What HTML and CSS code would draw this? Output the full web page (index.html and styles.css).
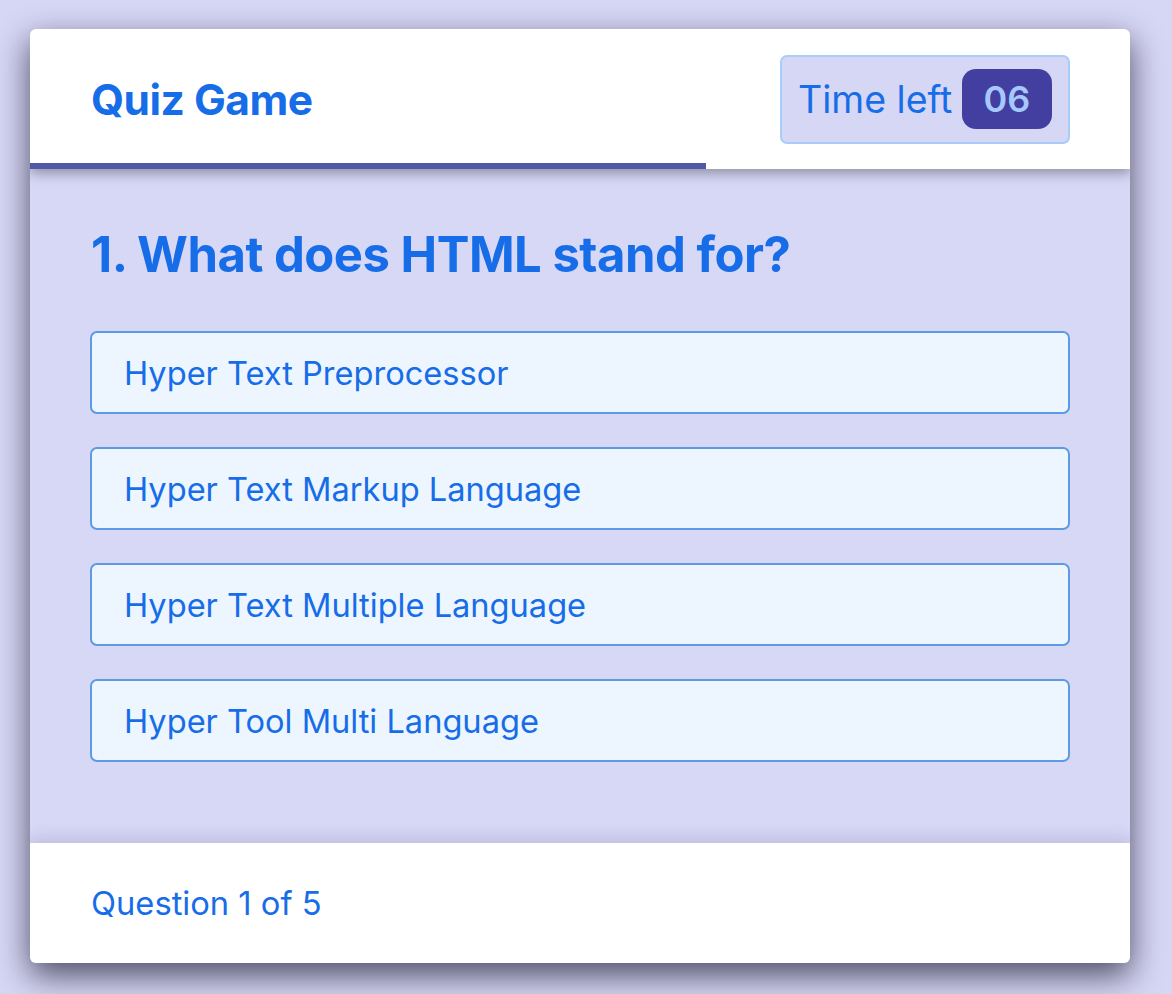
FILE: index.html
```html
<!DOCTYPE html>
<html lang="en">
<head>
<meta charset="utf-8">
<title>Quiz Game</title>
<link rel="stylesheet" href="styles.css">
</head>
<body>
<div class="quiz">
  <header class="quiz-header">
    <h1 class="title">Quiz Game</h1>
    <div class="timer">
      <span class="timer-label">Time left</span>
      <span class="timer-sec">06</span>
    </div>
    <div class="time-line" style="width: 676px;"></div>
  </header>
  <section class="quiz-body">
    <h2 class="question">1. What does HTML stand for?</h2>
    <ul class="options">
      <li class="option">Hyper Text Preprocessor</li>
      <li class="option">Hyper Text Markup Language</li>
      <li class="option">Hyper Text Multiple Language</li>
      <li class="option">Hyper Tool Multi Language</li>
    </ul>
  </section>
  <footer class="quiz-footer">
    <span class="count">Question 1 of 5</span>
  </footer>
</div>
</body>
</html>
```

FILE: styles.css
```css
* { box-sizing: border-box; }
html, body { min-height: 994px; }
body {
  margin: 0;
  background: #d6d6f5;
  font-family: Inter, "Open Sans", sans-serif;
  color: #176de8;
}
.quiz {
  margin: 29px 0 0 30px;
  width: 1100px;
  height: 934px;
  background: #d7d7f6;
  border-radius: 6px;
  box-shadow: 0 12px 32px rgba(10, 10, 30, 0.68);
  display: flex;
  flex-direction: column;
  overflow: hidden;
}
.quiz-header {
  position: relative;
  z-index: 2;
  height: 140px;
  flex: none;
  background: #fff;
  display: flex;
  align-items: center;
  justify-content: space-between;
  padding: 0 60px 0 61px;
  box-shadow: 0 4px 12px rgba(0, 0, 0, 0.35);
}
.title {
  margin: 0;
  font-size: 42.5px;
  font-weight: 700;
  letter-spacing: -0.5px;
}
.timer {
  width: 290px;
  height: 89px;
  background: #d6d6f5;
  border: 2px solid #a9cdf9;
  border-radius: 7px;
  display: flex;
  align-items: center;
  justify-content: space-between;
  padding: 0 16px 0 16px;
}
.timer-label {
  font-size: 37.5px;
}
.timer-sec {
  width: 90px;
  height: 60px;
  border-radius: 14px;
  background: #433fa0;
  color: #a6c8fd;
  font-size: 36px;
  font-weight: 600;
  display: flex;
  align-items: center;
  justify-content: center;
}
.time-line {
  position: absolute;
  left: 0;
  bottom: 0;
  height: 6px;
  background: #4f59a8;
}
.quiz-body {
  flex: 1;
  padding: 50px 60px 0 60px;
}
.question {
  margin: 0 0 40px 1px;
  font-size: 49px;
  line-height: 72px;
  font-weight: 700;
  letter-spacing: -0.5px;
}
.options {
  list-style: none;
  margin: 0;
  padding: 0;
  display: flex;
  flex-direction: column;
  gap: 33px;
}
.option {
  height: 83px;
  border: 2px solid #5c9be3;
  border-radius: 7px;
  background: #edf6fe;
  display: flex;
  align-items: center;
  padding-left: 32px;
  font-size: 32.6px;
}
.quiz-footer {
  position: relative;
  z-index: 2;
  height: 120px;
  flex: none;
  background: #fff;
  display: flex;
  align-items: center;
  padding-left: 61px;
  box-shadow: 0 -4px 16px rgba(40, 40, 90, 0.16);
  font-size: 32.7px;
}
```
